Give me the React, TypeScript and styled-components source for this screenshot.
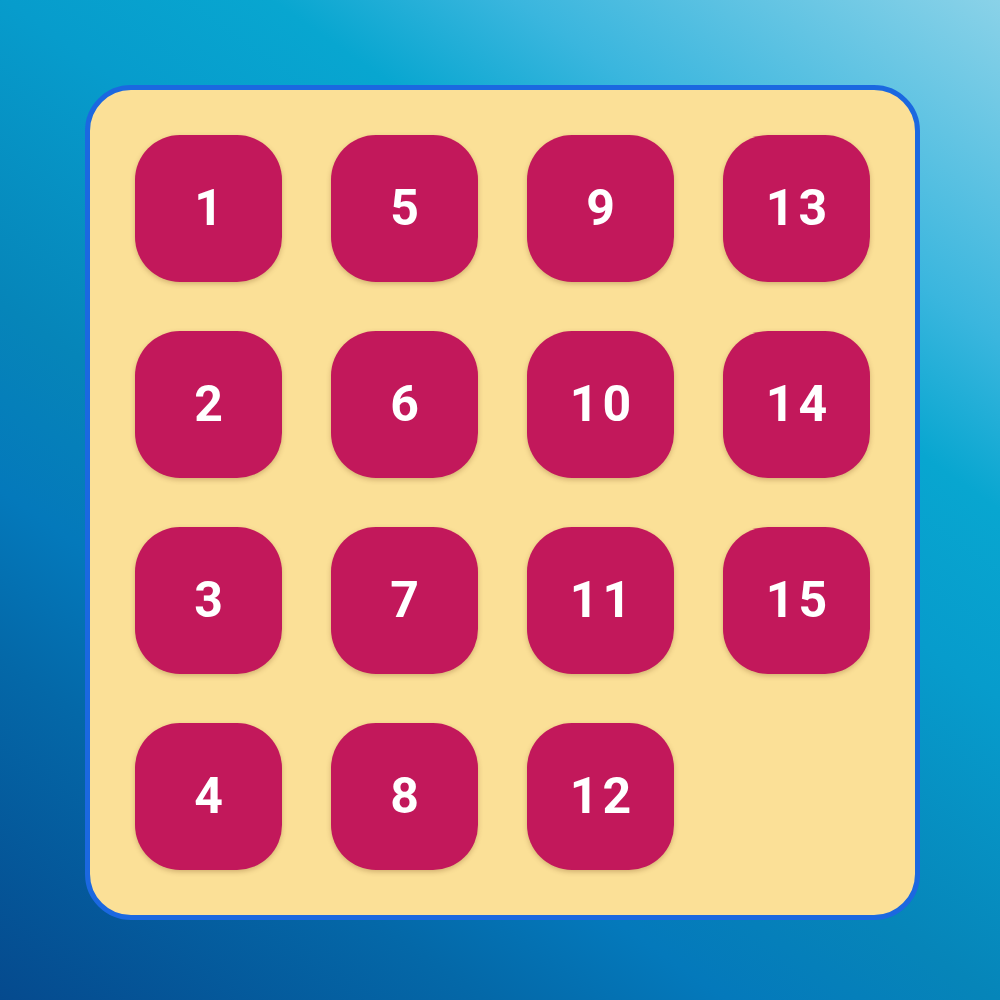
import React from "react";
import styled, { createGlobalStyle } from "styled-components";

const GlobalStyle = createGlobalStyle`
  html, body {
    margin: 0;
    padding: 0;
  }
  body {
    font-family: Roboto, "Noto Sans", sans-serif;
  }
`;

const Page = styled.div`
  width: 1000px;
  height: 1000px;
  display: flex;
  align-items: center;
  justify-content: center;
  background: linear-gradient(
    35deg,
    #054a8e 0%,
    #0468a8 20%,
    #0479bb 30%,
    #0685b9 41%,
    #079ccc 59%,
    #08a6d0 70%,
    #3ab6de 80%,
    #8ad2e8 100%
  );
`;

const Board = styled.div`
  box-sizing: border-box;
  width: 835px;
  height: 835px;
  margin-left: 5px;
  margin-top: 5px;
  padding: 45px;
  border: 5px solid #1b68e0;
  border-radius: 46px;
  background: #fbe097;
  display: grid;
  grid-template-columns: repeat(4, 147px);
  grid-template-rows: repeat(4, 147px);
  gap: 49px;
  grid-auto-flow: column;
`;

const Tile = styled.div<{ $empty?: boolean }>`
  display: flex;
  align-items: center;
  justify-content: center;
  border-radius: 45px;
  background: ${(p) => (p.$empty ? "transparent" : "#c2185b")};
  box-shadow: ${(p) =>
    p.$empty ? "none" : "0 2px 5px rgba(90, 40, 0, 0.25)"};
  color: #ffffff;
  font-family: Roboto, "Noto Sans", sans-serif;
  font-weight: 700;
  font-size: 50px;
  letter-spacing: 4px;
  padding-left: 4px;
  padding-bottom: 2px;
  box-sizing: border-box;
  user-select: none;
`;

const tiles: (number | null)[] = [
  1, 2, 3, 4, 5, 6, 7, 8, 9, 10, 11, 12, 13, 14, 15, null,
];

export default function App() {
  return (
    <>
      <GlobalStyle />
      <Page>
        <Board>
          {tiles.map((n, i) =>
            n === null ? (
              <Tile key={i} $empty />
            ) : (
              <Tile key={i}>{n}</Tile>
            )
          )}
        </Board>
      </Page>
    </>
  );
}
